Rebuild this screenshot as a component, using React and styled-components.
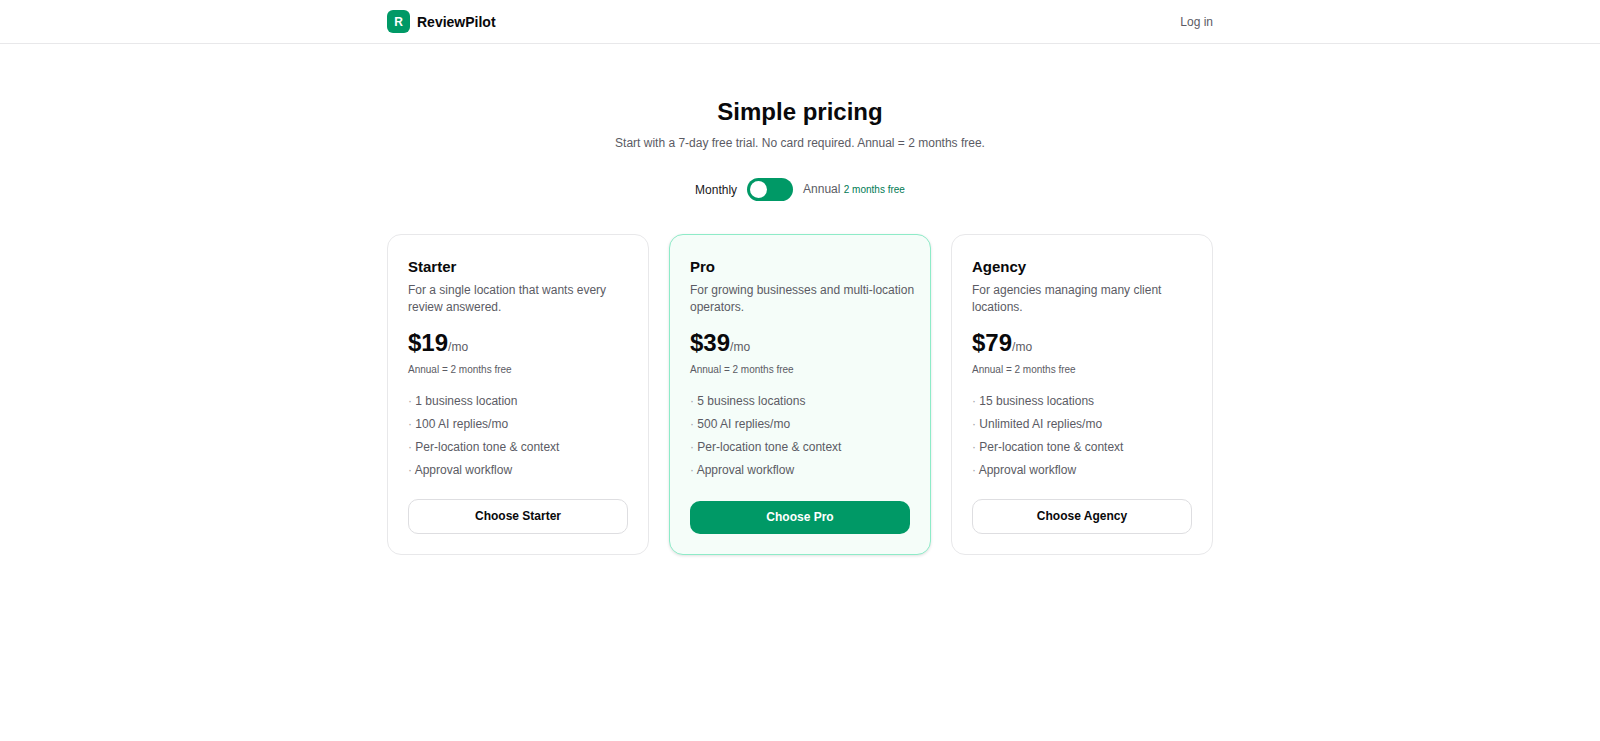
import React, { useState } from 'react'
import styled, { createGlobalStyle } from 'styled-components'

const GlobalStyle = createGlobalStyle`
  * {
    box-sizing: border-box;
  }
  body {
    margin: 0;
    background: #ffffff;
    color: #09090b;
    font-family: "Liberation Sans", Arial, sans-serif;
    font-size: 12px;
    line-height: 18px;
  }
  h1, h2, p, ul {
    margin: 0;
    padding: 0;
  }
  button {
    font-family: inherit;
    cursor: pointer;
  }
`

const Header = styled.header`
  border-bottom: 1px solid #e8e8ea;
`

const HeaderInner = styled.div`
  display: flex;
  align-items: center;
  justify-content: space-between;
  max-width: 874px;
  margin: 0 auto;
  padding: 10px 24px;
`

const Brand = styled.a`
  display: flex;
  align-items: center;
  gap: 7px;
  color: #09090b;
  font-size: 14px;
  font-weight: bold;
  text-decoration: none;
`

const BrandMark = styled.span`
  display: flex;
  align-items: center;
  justify-content: center;
  width: 23px;
  height: 23px;
  border-radius: 6px;
  background: #009966;
  color: #ffffff;
  font-size: 12px;
`

const LoginLink = styled.a`
  color: #5b5b64;
  text-decoration: none;
`

const Main = styled.main`
  max-width: 874px;
  margin: 0 auto;
  padding: 51px 24px;
`

const Title = styled.h1`
  font-size: 24px;
  line-height: 34px;
  text-align: center;
`

const Subtitle = styled.p`
  margin-top: 5px;
  color: #5b5b64;
  text-align: center;
`

const BillingRow = styled.div`
  display: flex;
  align-items: center;
  justify-content: center;
  gap: 10px;
  margin-top: 26px;
`

const BillingLabel = styled.span`
  color: ${(props) => (props.$active ? '#18181b' : '#5b5b64')};
  small {
    color: #007a55;
    font-size: 10px;
  }
`

const Switch = styled.button`
  display: flex;
  justify-content: ${(props) => (props.$on ? 'flex-end' : 'flex-start')};
  width: 46px;
  height: 23px;
  padding: 3px;
  border: 0;
  border-radius: 12px;
  background: #009966;
`

const Knob = styled.span`
  width: 17px;
  height: 17px;
  border-radius: 50%;
  background: #ffffff;
`

const Plans = styled.div`
  display: grid;
  grid-template-columns: repeat(3, 1fr);
  gap: 20px;
  margin-top: 33px;
`

const Card = styled.section`
  display: flex;
  flex-direction: column;
  padding: 20px;
  border: 1px solid ${(props) => (props.$featured ? '#8eebc8' : '#e8e8ea')};
  border-radius: 14px;
  background: ${(props) => (props.$featured ? '#f5fdf9' : '#ffffff')};
  box-shadow: ${(props) => (props.$featured ? '0 1px 3px rgba(0, 0, 0, 0.12)' : 'none')};
`

const PlanName = styled.h2`
  font-size: 15px;
  line-height: 23px;
`

const PlanText = styled.p`
  margin: 4px -8px 0 0;
  color: #5b5b64;
  line-height: 17px;
`

const Price = styled.p`
  margin-top: 12px;
  color: #5b5b64;
  line-height: 30px;
  strong {
    color: #09090b;
    font-size: 24px;
  }
`

const PriceNote = styled.p`
  color: #5b5b64;
  font-size: 10px;
  line-height: 16px;
`

const Features = styled.ul`
  display: flex;
  flex-direction: column;
  gap: 6px;
  margin: 15px 0 20px;
  color: #5b5b64;
  line-height: 17px;
  list-style: none;
`

const Bullet = styled.span`
  color: #9f9fa9;
`

const ChooseButton = styled.button`
  margin-top: auto;
  padding: 8px;
  border: ${(props) => (props.$featured ? '0' : '1px solid #dedee1')};
  border-radius: 10px;
  background: ${(props) => (props.$featured ? '#009966' : '#ffffff')};
  color: ${(props) => (props.$featured ? '#ffffff' : '#09090b')};
  font-size: 12px;
  font-weight: bold;
  line-height: 17px;
`

const plans = [
  {
    name: 'Starter',
    text: 'For a single location that wants every review answered.',
    monthly: 19,
    features: ['1 business location', '100 AI replies/mo', 'Per-location tone & context', 'Approval workflow'],
  },
  {
    name: 'Pro',
    text: 'For growing businesses and multi-location operators.',
    monthly: 39,
    featured: true,
    features: ['5 business locations', '500 AI replies/mo', 'Per-location tone & context', 'Approval workflow'],
  },
  {
    name: 'Agency',
    text: 'For agencies managing many client locations.',
    monthly: 79,
    features: ['15 business locations', 'Unlimited AI replies/mo', 'Per-location tone & context', 'Approval workflow'],
  },
]

function PlanCard({ plan, annual }) {
  return (
    <Card $featured={plan.featured}>
      <PlanName>{plan.name}</PlanName>
      <PlanText>{plan.text}</PlanText>
      <Price>
        <strong>${annual ? plan.monthly * 10 : plan.monthly}</strong>
        {annual ? '/yr' : '/mo'}
      </Price>
      <PriceNote>Annual = 2 months free</PriceNote>
      <Features>
        {plan.features.map((feature) => (
          <li key={feature}>
            <Bullet>·</Bullet> {feature}
          </li>
        ))}
      </Features>
      <ChooseButton type="button" $featured={plan.featured}>Choose {plan.name}</ChooseButton>
    </Card>
  )
}

function App() {
  const [annual, setAnnual] = useState(false)

  return (
    <>
      <GlobalStyle />
      <Header>
        <HeaderInner>
          <Brand href="#">
            <BrandMark>R</BrandMark>
            ReviewPilot
          </Brand>
          <LoginLink href="#login">Log in</LoginLink>
        </HeaderInner>
      </Header>
      <Main>
        <Title>Simple pricing</Title>
        <Subtitle>Start with a 7-day free trial. No card required. Annual = 2 months free.</Subtitle>
        <BillingRow>
          <BillingLabel $active={!annual}>Monthly</BillingLabel>
          <Switch
            type="button"
            role="switch"
            aria-checked={annual}
            aria-label="Annual billing"
            $on={annual}
            onClick={() => setAnnual(!annual)}
          >
            <Knob />
          </Switch>
          <BillingLabel $active={annual}>
            Annual <small>2 months free</small>
          </BillingLabel>
        </BillingRow>
        <Plans>
          {plans.map((plan) => (
            <PlanCard key={plan.name} plan={plan} annual={annual} />
          ))}
        </Plans>
      </Main>
    </>
  )
}

export default App
